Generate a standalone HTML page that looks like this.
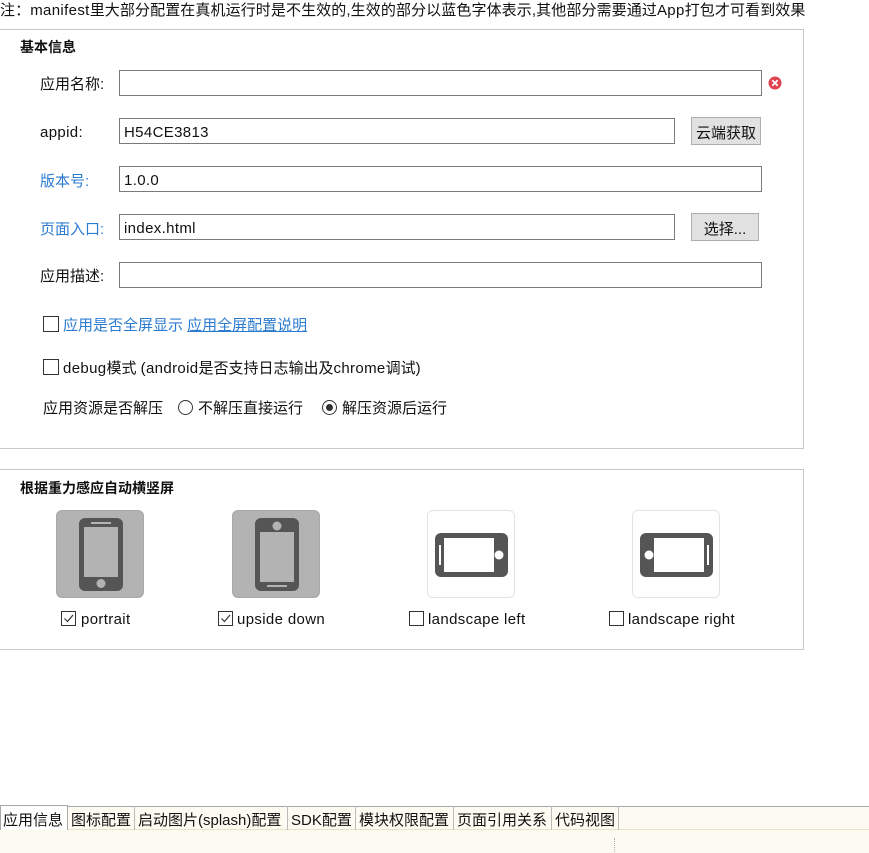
<!DOCTYPE html>
<html><head><meta charset="utf-8"><style>
*{margin:0;padding:0;box-sizing:border-box}
body{width:869px;height:853px;background:#fff;position:relative;overflow:hidden;font-family:"Liberation Sans","Noto Sans CJK SC",sans-serif;font-size:15px;color:#111}
.a{position:absolute;white-space:nowrap;line-height:20px;padding-top:2px}
.box{position:absolute;border:1px solid #c8c8c8}
.t{font-weight:bold;font-size:14px}
.in{position:absolute;border:1px solid #7a7a7a;background:#fff;height:26px;padding-left:4px;padding-top:3px;display:flex;align-items:center;white-space:nowrap}
.btn{position:absolute;border:1px solid #adadad;background:#e1e1e1;display:flex;align-items:center;justify-content:center;padding-top:2px}
.blue{color:#2b7bd0}
.cb{position:absolute;width:15px;height:15px;border:1px solid #333;background:#fff}
.rd{position:absolute;width:15px;height:15px;border:1px solid #333;border-radius:50%;background:#fff}
.ic{position:absolute;width:88px;height:88px;border-radius:6px}
.on{background:#b3b3b3;border:1px solid #a8a8a8}
.off{background:#fff;border:1px solid #e4e4e4}
.tab{position:absolute;top:806px;height:24px;display:flex;align-items:center;font-size:15px;border-right:1px solid #bbb;padding:2px 3px 0;white-space:nowrap}
.w{letter-spacing:0.35px}
</style></head><body>
<div class="a" style="left:0;top:-1px;letter-spacing:0.1px">注：<span class="w">manifest</span>里大部分配置在真机运行时是不生效的,生效的部分以蓝色字体表示,其他部分需要通过<span class="w">App</span>打包才可看到效果</div>

<div class="box" style="left:-1px;top:29px;width:805px;height:420px"></div>
<div class="a t" style="left:20px;top:35px">基本信息</div>
<div class="a" style="left:40px;top:73px">应用名称:</div>
<div class="in" style="left:119px;top:70px;width:643px"></div>
<svg class="a" style="left:768px;top:76px;padding:0" width="14" height="14"><circle cx="7" cy="7" r="6.5" fill="#e0434f"/><path d="M4.3 4.3L9.7 9.7M9.7 4.3L4.3 9.7" stroke="#fff" stroke-width="1.8"/></svg>
<div class="a w" style="left:40px;top:121px">appid:</div>
<div class="in w" style="left:119px;top:118px;width:556px">H54CE3813</div>
<div class="btn" style="left:691px;top:117px;width:70px;height:28px">云端获取</div>
<div class="a blue" style="left:40px;top:170px">版本号:</div>
<div class="in w" style="left:119px;top:166px;width:643px">1.0.0</div>
<div class="a blue" style="left:40px;top:218px">页面入口:</div>
<div class="in w" style="left:119px;top:214px;width:556px">index.html</div>
<div class="btn" style="left:691px;top:213px;width:68px;height:28px">选择...</div>
<div class="a" style="left:40px;top:265px">应用描述:</div>
<div class="in" style="left:119px;top:262px;width:643px"></div>

<div class="cb" style="left:43px;top:316px;width:16px;height:16px"></div>
<div class="a blue" style="left:63px;top:314px">应用是否全屏显示 <span style="text-decoration:underline">应用全屏配置说明</span></div>
<div class="cb" style="left:43px;top:359px;width:16px;height:16px"></div>
<div class="a" style="left:63px;top:357px"><span class="w">debug</span>模式 <span class="w">(android</span>是否支持日志输出及<span class="w">chrome</span>调试)</div>
<div class="a" style="left:43px;top:397px">应用资源是否解压</div>
<div class="rd" style="left:178px;top:400px"></div>
<div class="a" style="left:198px;top:397px">不解压直接运行</div>
<div class="rd" style="left:322px;top:400px"><div style="position:absolute;left:3px;top:3px;width:7px;height:7px;border-radius:50%;background:#333"></div></div>
<div class="a" style="left:342px;top:397px">解压资源后运行</div>

<div class="box" style="left:-1px;top:469px;width:805px;height:181px"></div>
<div class="a t" style="left:20px;top:476px">根据重力感应自动横竖屏</div>

<div class="ic on" style="left:56px;top:510px"><svg width="88" height="88"><rect x="22" y="7" width="44" height="73" rx="6" fill="#555"/><rect x="27" y="16" width="34" height="50" fill="#b3b3b3"/><rect x="34" y="11" width="20" height="2" fill="#b3b3b3"/><circle cx="44" cy="72.5" r="4.5" fill="#b3b3b3"/></svg></div>
<div class="ic on" style="left:232px;top:510px"><svg width="88" height="88"><rect x="22" y="7" width="44" height="73" rx="6" fill="#555"/><rect x="27" y="21" width="34" height="50" fill="#b3b3b3"/><rect x="34" y="74" width="20" height="2" fill="#b3b3b3"/><circle cx="44" cy="15" r="4.5" fill="#b3b3b3"/></svg></div>
<div class="ic off" style="left:427px;top:510px"><svg width="88" height="88"><rect x="7" y="22" width="73" height="44" rx="6" fill="#555"/><rect x="16" y="27" width="50" height="34" fill="#fff"/><rect x="11" y="34" width="2" height="20" fill="#fff"/><circle cx="71" cy="44" r="4.5" fill="#fff"/></svg></div>
<div class="ic off" style="left:632px;top:510px"><svg width="88" height="88"><rect x="7" y="22" width="73" height="44" rx="6" fill="#555"/><rect x="21" y="27" width="50" height="34" fill="#fff"/><rect x="74" y="34" width="2" height="20" fill="#fff"/><circle cx="16" cy="44" r="4.5" fill="#fff"/></svg></div>

<div class="cb" style="left:61px;top:611px"><svg width="13" height="13" style="position:absolute;left:0;top:0"><path d="M2.5 6.5L5.5 9.5L11 3" stroke="#333" stroke-width="1.2" fill="none"/></svg></div>
<div class="a w" style="left:81px;top:608px">portrait</div>
<div class="cb" style="left:218px;top:611px"><svg width="13" height="13" style="position:absolute;left:0;top:0"><path d="M2.5 6.5L5.5 9.5L11 3" stroke="#333" stroke-width="1.2" fill="none"/></svg></div>
<div class="a w" style="left:237px;top:608px">upside down</div>
<div class="cb" style="left:409px;top:611px"></div>
<div class="a w" style="left:428px;top:608px">landscape left</div>
<div class="cb" style="left:609px;top:611px"></div>
<div class="a w" style="left:628px;top:608px">landscape right</div>

<div style="position:absolute;left:0;top:806px;width:869px;height:47px;background:#fdfaf1;border-top:1px solid #a8a8a8"></div>
<div style="position:absolute;left:0;top:829px;width:869px;height:1px;background:#e8e2c8"></div>
<div style="position:absolute;left:0;top:805px;width:68px;height:25px;background:#fff;border:1px solid #a8a8a8;border-bottom:none"></div>
<div class="tab" style="left:0;width:68px;border:none">应用信息</div>
<div class="tab" style="left:68px;width:67px">图标配置</div>
<div class="tab" style="left:135px;width:153px">启动图片(splash)配置</div>
<div class="tab" style="left:288px;width:68px">SDK配置</div>
<div class="tab" style="left:356px;width:98px">模块权限配置</div>
<div class="tab" style="left:454px;width:98px">页面引用关系</div>
<div class="tab" style="left:552px;width:67px">代码视图</div>
<div style="position:absolute;left:614px;top:838px;height:14px;border-left:1px dotted #aaa"></div>
</body></html>
